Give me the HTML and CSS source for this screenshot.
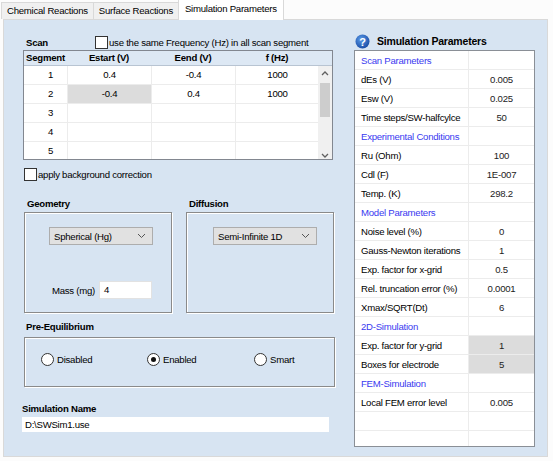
FILE: index.html
```html
<!DOCTYPE html>
<html lang="en">
<head>
    <meta charset="UTF-8">
    <title>Simulation Parameters</title>
    <link rel="stylesheet" href="styles.css">
</head>
<body>
    <div class="tabs">
        <div class="tab">Chemical Reactions</div>
        <div class="tab">Surface Reactions</div>
        <div class="tab active">Simulation Parameters</div>
    </div>
    <div class="tabpanel">
        <div class="left">
            <div class="scan-head">
                <span class="label bold scan-label">Scan</span>
                <span class="check"></span>
                <span class="label">use the same Frequency (Hz) in all scan segment</span>
            </div>
            <div class="grid">
                <div class="grid-header">
                    <div class="c-seg">Segment</div>
                    <div class="c-val">Estart (V)</div>
                    <div class="c-val">Eend (V)</div>
                    <div class="c-val">f (Hz)</div>
                </div>
                <div class="grid-body">
                    <div class="grid-rows">
                        <div class="grid-row"><div class="c-seg">1</div><div class="c-val">0.4</div><div class="c-val">-0.4</div><div class="c-val">1000</div></div>
                        <div class="grid-row"><div class="c-seg">2</div><div class="c-val sel">-0.4</div><div class="c-val">0.4</div><div class="c-val">1000</div></div>
                        <div class="grid-row"><div class="c-seg">3</div><div class="c-val"></div><div class="c-val"></div><div class="c-val"></div></div>
                        <div class="grid-row"><div class="c-seg">4</div><div class="c-val"></div><div class="c-val"></div><div class="c-val"></div></div>
                        <div class="grid-row"><div class="c-seg">5</div><div class="c-val"></div><div class="c-val"></div><div class="c-val"></div></div>
                        <div class="grid-row"><div class="c-seg"></div><div class="c-val"></div><div class="c-val"></div><div class="c-val"></div></div>
                    </div>
                    <div class="vscroll">
                        <svg class="arrow" width="12" height="10" viewBox="0 0 12 10"><polyline points="3,6 6,3 9,6" fill="none" stroke="#606060" stroke-width="1.3"/></svg>
                        <div class="thumb"></div>
                        <div class="track"></div>
                        <svg class="arrow" width="12" height="10" viewBox="0 0 12 10"><polyline points="3,4 6,7 9,4" fill="none" stroke="#606060" stroke-width="1.3"/></svg>
                    </div>
                </div>
            </div>
            <div class="bg-row">
                <span class="check"></span>
                <span class="label">apply background correction</span>
            </div>

            <div class="groups">
                <div class="group-wrap">
                    <div class="label bold group-title">Geometry</div>
                    <div class="group geo">
                        <div class="combo">
                            <span>Spherical (Hg)</span>
                            <svg width="9" height="6" viewBox="0 0 9 6"><polyline points="1,1 4.5,4.5 8,1" fill="none" stroke="#555" stroke-width="1"/></svg>
                        </div>
                        <div class="mass">
                            <span class="label">Mass (mg)</span>
                            <div class="textbox small">4</div>
                        </div>
                    </div>
                </div>
                <div class="group-wrap">
                    <div class="label bold group-title">Diffusion</div>
                    <div class="group diff">
                        <div class="combo">
                            <span>Semi-Infinite 1D</span>
                            <svg width="9" height="6" viewBox="0 0 9 6"><polyline points="1,1 4.5,4.5 8,1" fill="none" stroke="#555" stroke-width="1"/></svg>
                        </div>
                    </div>
                </div>
            </div>

            <div class="label bold pre-title">Pre-Equilibrium</div>
            <div class="group pre">
                <div class="radio-item"><span class="radio"></span><span class="label">Disabled</span></div>
                <div class="radio-item"><span class="radio on"></span><span class="label">Enabled</span></div>
                <div class="radio-item"><span class="radio"></span><span class="label">Smart</span></div>
            </div>

            <div class="label bold name-title">Simulation Name</div>
            <div class="textbox name">D:\SWSim1.use</div>
        </div>

        <div class="right">
            <div class="params-head">
                <svg class="help" width="15" height="15" viewBox="0 0 15 15">
                    <defs>
                        <radialGradient id="hg" cx="40%" cy="35%" r="65%">
                            <stop offset="0" stop-color="#5b9be8"/>
                            <stop offset="1" stop-color="#1c4fa8"/>
                        </radialGradient>
                    </defs>
                    <circle cx="7.5" cy="7.5" r="7" fill="url(#hg)"/>
                    <text x="7.5" y="11.5" text-anchor="middle" font-family="Liberation Sans, sans-serif" font-size="11" font-weight="bold" fill="#fff">?</text>
                </svg>
                <span class="params-title">Simulation Parameters</span>
            </div>
            <div class="params">
                <table>
                    <tr class="cat"><td>Scan Parameters</td><td></td></tr>
                    <tr><td>dEs (V)</td><td>0.005</td></tr>
                    <tr><td>Esw (V)</td><td>0.025</td></tr>
                    <tr><td>Time steps/SW-halfcylce</td><td>50</td></tr>
                    <tr class="cat"><td>Experimental Conditions</td><td></td></tr>
                    <tr><td>Ru (Ohm)</td><td>100</td></tr>
                    <tr><td>Cdl (F)</td><td>1E-007</td></tr>
                    <tr><td>Temp. (K)</td><td>298.2</td></tr>
                    <tr class="cat"><td>Model Parameters</td><td></td></tr>
                    <tr><td>Noise level (%)</td><td>0</td></tr>
                    <tr><td>Gauss-Newton iterations</td><td>1</td></tr>
                    <tr><td>Exp. factor for x-grid</td><td>0.5</td></tr>
                    <tr><td>Rel. truncation error (%)</td><td>0.0001</td></tr>
                    <tr><td>Xmax/SQRT(Dt)</td><td>6</td></tr>
                    <tr class="cat"><td>2D-Simulation</td><td></td></tr>
                    <tr><td>Exp. factor for y-grid</td><td class="ro">1</td></tr>
                    <tr><td>Boxes for electrode</td><td class="ro">5</td></tr>
                    <tr class="cat"><td>FEM-Simulation</td><td></td></tr>
                    <tr><td>Local FEM error level</td><td>0.005</td></tr>
                    <tr><td></td><td></td></tr>
                    <tr><td></td><td></td></tr>
                </table>
            </div>
        </div>
    </div>
</body>
</html>
```

FILE: styles.css
```css
body {
    margin: 0;
    background-color: #fcfcfc;
    font-family: "Liberation Sans", Arial, sans-serif;
    font-size: 9.6px;
    letter-spacing: -0.25px;
    color: #000;
}
.tabs {
    display: flex;
    align-items: flex-end;
    height: 19px;
    padding-left: 1px;
}
.tab {
    height: 16px;
    line-height: 16px;
    padding: 0 5px;
    background-color: #f0f0f0;
    border: 1px solid #d9d9d9;
    border-bottom: none;
    margin-right: -1px;
}
.tab.active {
    position: relative;
    z-index: 1;
    height: 20px;
    line-height: 18px;
    margin-bottom: -1px;
    background-color: #fff;
    padding: 0 6px;
}
.tabpanel {
    display: flex;
    height: 436px;
    margin: 0 5px 0 3px;
    background-color: #d7e4f2;
    border: 1px solid #d9d9d9;
}
.left {
    width: 322px;
    padding-left: 19px;
}
.label {
    white-space: nowrap;
}
.bold {
    font-weight: bold;
}
.check {
    display: inline-block;
    width: 11px;
    height: 11px;
    background-color: #fff;
    border: 1px solid #333;
    margin-right: 1px;
}
.scan-head {
    display: flex;
    align-items: center;
    height: 16px;
    margin-top: 14px;
}
.scan-label {
    width: 69px;
    padding-left: 3px;
}
.grid {
    width: 308px;
    height: 108px;
    border: 1px solid #828790;
    background-color: #fff;
    overflow: hidden;
}
.grid-header {
    display: flex;
    height: 14px;
    line-height: 14px;
    background-color: #dde8f4;
    border-bottom: 1px solid #b8c4d2;
    font-weight: bold;
}
.c-seg {
    width: 43px;
    text-align: center;
    border-right: 1px solid #ececec;
    flex: none;
}
.c-val {
    width: 83px;
    text-align: center;
    border-right: 1px solid #ececec;
    flex: none;
}
.grid-header .c-seg,
.grid-header .c-val {
    border-right: none;
}
.grid-header .c-val {
    width: 84px;
}
.grid-body {
    display: flex;
}
.grid-rows {
    width: 294px;
}
.grid-row {
    display: flex;
    height: 18px;
    line-height: 18px;
    border-bottom: 1px solid #ececec;
}
.grid-row .c-seg {
    padding-left: 10px;
    width: 33px;
}
.sel {
    background-color: #dcdcdc;
}
.vscroll {
    width: 14px;
    display: flex;
    flex-direction: column;
    align-items: center;
    background-color: #f0f0f0;
    height: 94px;
}
.arrow {
    margin-top: 3px;
    flex: none;
}
.thumb {
    width: 10px;
    height: 34px;
    margin-top: 4px;
    background-color: #cdcdcd;
}
.track {
    flex: 1;
}
.bg-row {
    display: flex;
    align-items: center;
    height: 14px;
    margin-top: 7px;
    padding-left: 1px;
}
.groups {
    display: flex;
    gap: 14px;
    margin-top: 17px;
    padding-left: 1px;
}
.group-title {
    height: 14px;
    line-height: 12px;
    padding-left: 3px;
}
.group {
    border: 1px solid #8a8a8a;
    box-shadow: inset 1px 1px 0 #fff, 1px 1px 0 #fff;
}
.geo,
.diff {
    width: 146px;
    height: 99px;
}
.combo {
    display: flex;
    align-items: center;
    justify-content: space-between;
    width: 92px;
    height: 16px;
    margin: 14px 0 0 24px;
    padding: 0 6px 0 4px;
    background-color: #e1e1e1;
    border: 1px solid #adadad;
}
.diff .combo {
    margin-left: 26px;
}
.mass {
    display: flex;
    align-items: center;
    margin: 36px 0 0 27px;
}
.mass .label {
    margin-right: 4px;
}
.textbox {
    background-color: #fff;
    border: 1px solid #e2e2e2;
    padding-left: 4px;
}
.textbox.small {
    width: 47px;
    height: 16px;
    line-height: 16px;
}
.pre-title {
    height: 13px;
    line-height: 13px;
    margin-top: 7px;
    padding-left: 3px;
}
.pre {
    display: grid;
    grid-template-columns: 106px 107px 1fr;
    align-items: center;
    width: 309px;
    height: 48px;
    margin: 4px 0 0 1px;
}
.radio-item {
    display: flex;
    align-items: center;
    padding-left: 16px;
    margin-top: -5px;
}
.radio {
    width: 11px;
    height: 11px;
    border: 1px solid #333;
    border-radius: 50%;
    background-color: #fff;
    margin-right: 3px;
    position: relative;
}
.radio.on::after {
    content: "";
    position: absolute;
    left: 3px;
    top: 3px;
    width: 5px;
    height: 5px;
    border-radius: 50%;
    background-color: #111;
}
.name-title {
    height: 13px;
    line-height: 13px;
    margin-top: 15px;
    margin-left: -1px;
}
.textbox.name {
    width: 304px;
    height: 15px;
    line-height: 15px;
    margin: 2px 0 0 -1px;
    padding-left: 3px;
    border: none;
}
.right {
    padding-left: 9px;
}
.params-head {
    display: flex;
    align-items: center;
    height: 16px;
    margin-top: 13px;
}
.help {
    margin-left: 1px;
}
.params-title {
    margin-left: 7px;
    font-size: 10.5px;
    letter-spacing: -0.2px;
    font-weight: bold;
}
.params {
    width: 179px;
    height: 395px;
    margin-top: 1px;
    border: 1px solid #8a8f96;
    background-color: #fff;
    overflow: hidden;
}
table {
    border-collapse: collapse;
    width: 179px;
    table-layout: fixed;
}
td {
    height: 18px;
    padding: 0;
    border-bottom: 1px solid #ececec;
    white-space: nowrap;
    overflow: hidden;
}
td:first-child {
    width: 107px;
    padding-left: 6px;
    border-right: 1px solid #ececec;
}
td:last-child {
    text-align: center;
    color: #222;
}
.cat td {
    color: #3a3af0;
}
.ro {
    background-color: #dcdcdc;
}
```
